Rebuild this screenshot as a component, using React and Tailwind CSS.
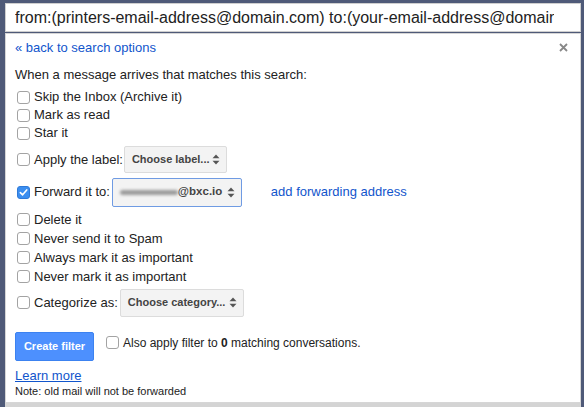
const Box = ({ checked }) =>
  checked ? (
    <span className="w-[13px] h-[13px] rounded-[3px] bg-[#3b8ef0] border border-[#2f7ad8] flex items-center justify-center shrink-0">
      <svg width="9" height="9" viewBox="0 0 10 10">
        <path d="M1.5 5.2 L4 7.6 L8.6 2.2" fill="none" stroke="white" strokeWidth="1.8" strokeLinecap="round" strokeLinejoin="round" />
      </svg>
    </span>
  ) : (
    <span className="block w-[13px] h-[13px] rounded-[3px] bg-white border border-[#a3a3a3] shrink-0" />
  );

const Arrows = () => (
  <svg width="8" height="11" viewBox="0 0 8 11" className="shrink-0">
    <path d="M4 0.5 L7.5 4.3 L0.5 4.3 Z" fill="#555" />
    <path d="M4 10.5 L7.5 6.7 L0.5 6.7 Z" fill="#555" />
  </svg>
);

const Row = ({ label, h = "h-[18px]", children, checked }) => (
  <div className={`flex items-center ${h}`}>
    <span className="ml-[2px] mr-[4px] shrink-0">
      <Box checked={checked} />
    </span>
    <span>{label}</span>
    {children}
  </div>
);

const Select = ({ className, children }) => (
  <div className={`flex items-center justify-between rounded-[2px] border bg-[#f3f3f3] text-[11px] font-bold text-[#444] pl-[7px] pr-[6px] ${className}`}>
    {children}
    <Arrows />
  </div>
);

export default function App() {
  return (
    <div
      className="w-[584px] h-[407px] overflow-hidden bg-[#4f5a78] pl-[5px] pr-[3px] pt-[3px] text-[#222]"
      style={{ fontFamily: '"Liberation Sans", Arial, sans-serif' }}
    >
      {/* search box */}
      <div className="h-[29px] bg-white border border-[#cfcfcf] flex items-center pl-[9px]">
        <div className="w-[539px] text-[16px] text-[#222] whitespace-nowrap overflow-hidden">
          from:(printers-email-address@domain.com) to:(your-email-address@domain.com)
        </div>
      </div>

      {/* filter panel */}
      <div className="mt-[1px] h-[370px] bg-white border border-[#d6d6d6] pl-[9px] pr-[10px] text-[13px]">
        <div className="flex items-center justify-between h-[27px]">
          <a className="text-[#1155cc]">« back to search options</a>
          <svg width="9" height="9" viewBox="0 0 9 9" className="mr-[2px]">
            <path d="M1 1 L8 8 M8 1 L1 8" stroke="#888" strokeWidth="1.8" />
          </svg>
        </div>

        <div className="h-[27px] flex items-center">When a message arrives that matches this search:</div>

        <Row label="Skip the Inbox (Archive it)" />
        <Row label="Mark as read" />
        <Row label="Star it" />

        <Row label="Apply the label:" h="h-[35px]">
          <Select className="ml-[1px] w-[103px] h-[27px] border-[#dcdcdc]">Choose label...</Select>
        </Row>

        <Row label="Forward it to:" h="h-[30px]" checked>
          <Select className="ml-[2px] w-[130px] h-[29px] border-[#6f9be3] bg-[#f2f2f2]">
            <span className="flex items-center">
              <span className="w-[58px] h-[5px] rounded-full bg-[#9a9a9a] blur-[1.5px]" />
              <span className="text-[11.5px]">@bxc.io</span>
            </span>
          </Select>
          <a className="ml-[29px] text-[#1155cc]">add forwarding address</a>
        </Row>

        <div className="h-[3px]" />
        <Row label="Delete it" h="h-[19px]" />
        <Row label="Never send it to Spam" h="h-[19px]" />
        <Row label="Always mark it as important" h="h-[19px]" />
        <Row label="Never mark it as important" h="h-[19px]" />

        <Row label="Categorize as:" h="h-[33px]">
          <Select className="ml-[2px] w-[124px] h-[28px] border-[#dcdcdc]">Choose category...</Select>
        </Row>

        <div className="flex items-center mt-[13px] h-[29px]">
          <button className="w-[79px] h-[29px] shrink-0 rounded-[2px] bg-[#4d90fe] border border-[#3c82f0] text-white text-[11px] font-bold">
            Create filter
          </button>
          <span className="ml-[12px] mr-[4px] -mt-[8px] shrink-0">
            <Box />
          </span>
          <span className="-mt-[8px] text-[12px]">
            Also apply filter to <b>0</b> matching conversations.
          </span>
        </div>

        <a className="block mt-[5px] h-[17px] text-[#1155cc] underline">Learn more</a>
        <div className="text-[11px] leading-[16px]">Note: old mail will not be forwarded</div>
      </div>
      <div className="h-[4px] bg-[#d4d4d4]" />
    </div>
  );
}
